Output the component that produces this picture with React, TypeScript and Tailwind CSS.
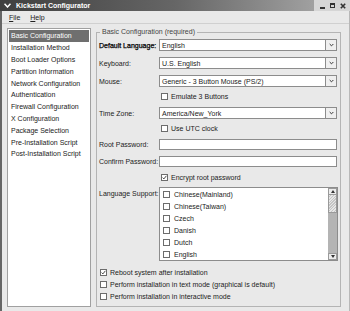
import React from 'react';

const sections = [
  'Basic Configuration',
  'Installation Method',
  'Boot Loader Options',
  'Partition Information',
  'Network Configuration',
  'Authentication',
  'Firewall Configuration',
  'X Configuration',
  'Package Selection',
  'Pre-Installation Script',
  'Post-Installation Script',
];

const languages = ['Chinese(Mainland)', 'Chinese(Taiwan)', 'Czech', 'Danish', 'Dutch', 'English'];

function CheckBox({ checked }: { checked?: boolean }) {
  return (
    <span className="w-[7px] h-[7px] border border-[#6c6c6c] bg-white flex items-center justify-center shrink-0">
      {checked && (
        <svg viewBox="0 0 5 5" className="w-[5px] h-[5px]">
          <path d="M0.6 2.6 L1.9 3.9 L4.4 0.8" stroke="#333" strokeWidth="0.9" fill="none" />
        </svg>
      )}
    </span>
  );
}

function Check({ label, checked, className }: { label: string; checked?: boolean; className: string }) {
  return (
    <div className={`flex items-center h-[12px] gap-[3px] ${className}`}>
      <CheckBox checked={checked} />
      <span>{label}</span>
    </div>
  );
}

function Combo({ value }: { value: string }) {
  return (
    <div className="w-[178px] h-[12px] bg-white border border-[#8c8c8c] flex items-stretch">
      <span className="flex-1 pl-[2px] flex items-center">{value}</span>
      <span className="w-[11px] border-l border-[#8c8c8c] bg-[#efefef] flex items-center justify-center">
        <svg viewBox="0 0 6 4" className="w-[5px] h-[4px]">
          <path d="M0.8 0.8 L3 3 L5.2 0.8" stroke="#333" strokeWidth="1.2" fill="none" />
        </svg>
      </span>
    </div>
  );
}

function Row({ label, strong, className, children }: { label: string; strong?: boolean; className: string; children: React.ReactNode }) {
  return (
    <div className={`flex items-center ${className}`}>
      <span className={`w-[60px] shrink-0 whitespace-nowrap ${strong ? 'text-black [-webkit-text-stroke:0.25px_#000]' : ''}`}>{label}</span>
      {children}
    </div>
  );
}

function Arrow({ up }: { up?: boolean }) {
  return (
    <div className="h-[7px] bg-[#ececec] border border-[#9a9a9a] flex items-center justify-center">
      <svg viewBox="0 0 4 3" className="w-[4px] h-[3px]">
        <path d={up ? 'M0 3 L2 0 L4 3 Z' : 'M0 0 L2 3 L4 0 Z'} fill="#333" />
      </svg>
    </div>
  );
}

export default function App() {
  return (
    <div className="w-[350px] h-[311px] bg-[#e9e9e9] flex flex-col overflow-hidden text-[7px] leading-none text-[#222] font-['Liberation_Sans',sans-serif]">
      {/* title bar */}
      <div className="h-[11px] flex items-stretch bg-gradient-to-r from-[#3f3f3f] via-[#666] to-[#b0b0b0]">
        <div className="w-[14px] flex items-center justify-center">
          <svg viewBox="0 0 7 5" className="w-[7px] h-[5px]">
            <path d="M0.5 0.8 L3.5 4 L6.5 0.8" stroke="#fff" strokeWidth="1.5" fill="none" />
          </svg>
        </div>
        <span className="flex items-center pl-[2px] text-white font-bold">Kickstart Configurator</span>
        <div className="flex-1" />
        <div className="w-[36px] bg-[#d6d6d6] flex items-center justify-end gap-[5px] pr-[4px]">
          <span className="w-[5px] h-[2px] bg-[#333] mt-[4px]" />
          <span className="w-[5px] h-[5px] border border-[#333] border-t-2" />
          <svg viewBox="0 0 6 6" className="w-[6px] h-[6px]">
            <path d="M0.8 0.8 L5.2 5.2 M5.2 0.8 L0.8 5.2" stroke="#333" strokeWidth="1.6" />
          </svg>
        </div>
      </div>

      <div className="flex-1 flex flex-col border-l-2 border-[#666] border-r border-r-[#b8b8b8]">
        {/* menu bar */}
        <div className="h-[13px] flex items-center gap-[10px] pl-[7px] border-b border-[#d0d0d0]">
          <span><span className="underline">F</span>ile</span>
          <span><span className="underline">H</span>elp</span>
        </div>

        <div className="flex-1 flex pl-[5px] pt-[4px] pb-[4px] gap-[5px]">
          {/* section list */}
          <div className="w-[84px] bg-white border border-[#a0a0a0] p-px flex flex-col">
            {sections.map((s, i) => (
              <div
                key={s}
                className={`h-[11.8px] flex items-center pl-[2px] whitespace-nowrap ${i === 0 ? 'bg-[#6f6f6f] text-white' : ''}`}
              >
                {s}
              </div>
            ))}
          </div>

          {/* basic configuration group */}
          <fieldset className="w-[245px] border border-[#b4b4b4] pl-[2px] pr-[2px] flex flex-col">
            <legend className="ml-[1px] px-[2px] leading-[8px] text-[#444]">Basic Configuration (required)</legend>
            <Row label="Default Language:" strong className="mt-[3px]">
              <Combo value="English" />
            </Row>
            <Row label="Keyboard:" className="mt-[6px]">
              <Combo value="U.S. English" />
            </Row>
            <Row label="Mouse:" className="mt-[6px]">
              <Combo value="Generic - 3 Button Mouse (PS/2)" />
            </Row>
            <Check label="Emulate 3 Buttons" className="mt-[3px] ml-[62px]" />
            <Row label="Time Zone:" className="mt-[5px]">
              <Combo value="America/New_York" />
            </Row>
            <Check label="Use UTC clock" className="mt-[3px] ml-[62px]" />
            <Row label="Root Password:" className="mt-[5px]">
              <div className="w-[178px] h-[11px] bg-white border border-[#8c8c8c]" />
            </Row>
            <Row label="Confirm Password:" className="mt-[6px]">
              <div className="w-[178px] h-[11px] bg-white border border-[#8c8c8c]" />
            </Row>
            <Check label="Encrypt root password" checked className="mt-[4px] ml-[62px]" />
            <div className="flex items-start mt-[4px]">
              <span className="w-[60px] shrink-0 pt-[3px] whitespace-nowrap">Language Support:</span>
              <div className="w-[179px] h-[74px] bg-white border border-[#8c8c8c] flex">
                <div className="flex-1 flex flex-col pl-[3px]">
                  {languages.map((l) => (
                    <div key={l} className="h-[12px] flex items-center gap-[4px]">
                      <CheckBox />
                      <span>{l}</span>
                    </div>
                  ))}
                </div>
                <div className="w-[9px] flex flex-col bg-[#b4b4b4]">
                  <Arrow up />
                  <div className="h-[18px] border border-[#9a9a9a] border-t-0 bg-[repeating-linear-gradient(135deg,#e6e6e6_0px,#e6e6e6_1px,#c4c4c4_1px,#c4c4c4_2px)]" />
                  <div className="flex-1" />
                  <Arrow />
                </div>
              </div>
            </div>
            <Check label="Reboot system after installation" checked className="mt-[5px] ml-px" />
            <Check label="Perform installation in text mode (graphical is default)" className="ml-px" />
            <Check label="Perform installation in interactive mode" className="ml-px" />
          </fieldset>
        </div>
      </div>
    </div>
  );
}
